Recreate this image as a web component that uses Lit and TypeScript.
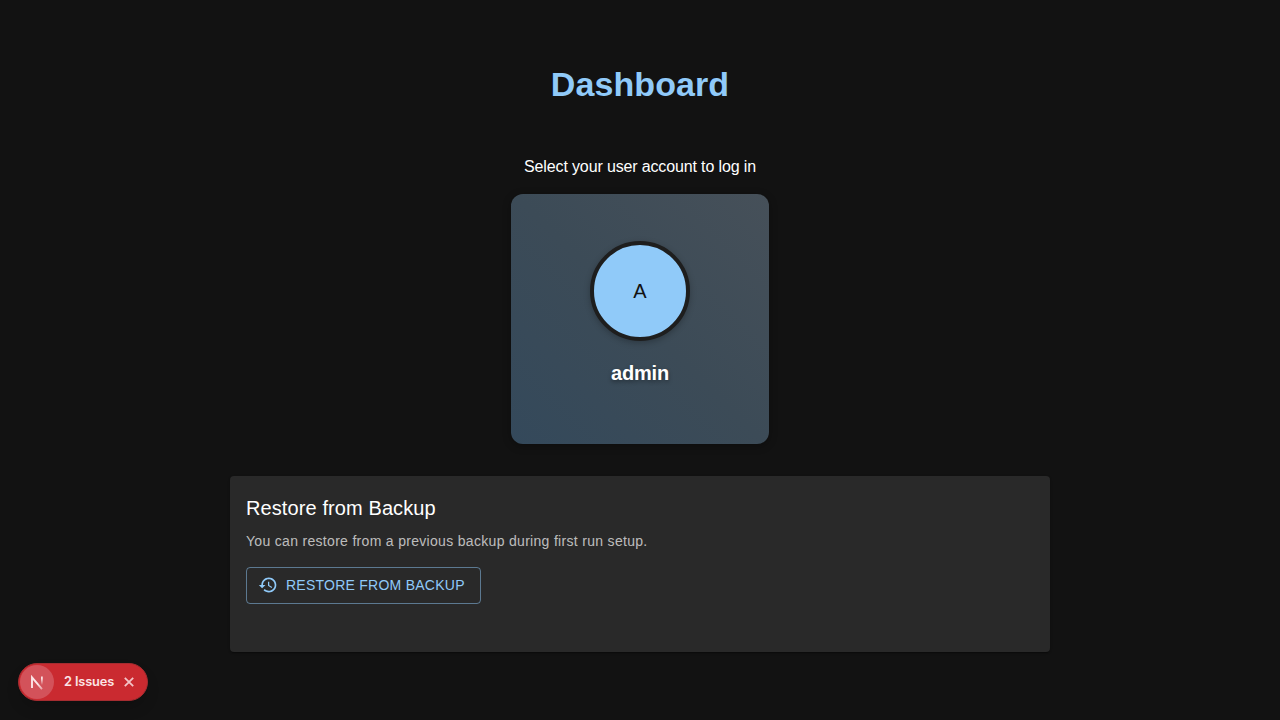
import { LitElement, html, css } from "lit";
import { customElement } from "lit/decorators.js";

@customElement("user-card")
class UserCard extends LitElement {
  static properties = { name: { type: String } };
  declare name: string;

  static styles = css`
    :host {
      display: block;
    }
    .card {
      box-sizing: border-box;
      width: 258px;
      height: 250px;
      border-radius: 12px;
      padding-top: 47px;
      display: flex;
      flex-direction: column;
      align-items: center;
      background: linear-gradient(45deg, #34495b 0%, #3c4b57 50%, #465059 100%);
      box-shadow: 0 2px 8px rgba(0, 0, 0, 0.3);
    }
    .avatar {
      box-sizing: border-box;
      width: 100px;
      height: 100px;
      border: 4px solid #1e1e1e;
      border-radius: 50%;
      display: flex;
      align-items: center;
      justify-content: center;
      background: #90caf9;
      color: #121212;
      font-size: 20px;
      line-height: 1;
      box-shadow: 0 2px 6px rgba(0, 0, 0, 0.25);
    }
    .name {
      margin-top: 16px;
      color: #fff;
      font-size: 20px;
      font-weight: 700;
      line-height: 32px;
      letter-spacing: -0.2px;
      text-shadow: 0 2px 4px rgba(0, 0, 0, 0.4);
    }
  `;

  render() {
    return html`<div class="card">
      <div class="avatar">${this.name[0].toUpperCase()}</div>
      <div class="name">${this.name}</div>
    </div>`;
  }
}

@customElement("restore-panel")
class RestorePanel extends LitElement {
  static styles = css`
    :host {
      display: block;
      align-self: stretch;
    }
    .panel {
      box-sizing: border-box;
      height: 176px;
      padding: 16px;
      border-radius: 4px;
      background: #292929;
      box-shadow: 0 2px 1px -1px rgba(0, 0, 0, 0.2), 0 1px 1px rgba(0, 0, 0, 0.14),
        0 1px 3px rgba(0, 0, 0, 0.12);
    }
    .title {
      margin: 0 0 7px;
      font-size: 20px;
      font-weight: 500;
      line-height: 32px;
      letter-spacing: 0.1px;
      color: #fff;
    }
    .text {
      margin: 0 0 16px;
      font-size: 14px;
      line-height: 20px;
      letter-spacing: 0.31px;
      color: rgba(255, 255, 255, 0.7);
    }
    .button {
      display: inline-flex;
      align-items: center;
      gap: 8px;
      box-sizing: border-box;
      padding: 5px 15px 5px 11px;
      border: 1px solid rgba(144, 202, 249, 0.5);
      border-radius: 4px;
      background: transparent;
      color: #90caf9;
      font-family: inherit;
      font-size: 14px;
      font-weight: 500;
      line-height: 24.5px;
      letter-spacing: 0.25px;
      text-transform: uppercase;
    }
    .icon {
      width: 20px;
      height: 20px;
      fill: currentColor;
    }
  `;

  render() {
    return html`<section class="panel">
      <h2 class="title">Restore from Backup</h2>
      <p class="text">You can restore from a previous backup during first run setup.</p>
      <button class="button">
        <svg class="icon" viewBox="0 0 24 24">
          <path
            d="M13 3c-4.97 0-9 4.03-9 9H1l3.89 3.89.07.14L9 12H6c0-3.87 3.13-7 7-7s7 3.13 7 7-3.13 7-7 7c-1.93 0-3.68-.79-4.94-2.06l-1.42 1.42C8.27 19.99 10.51 21 13 21c4.97 0 9-4.03 9-9s-4.03-9-9-9m-1 5v5l4.28 2.54.72-1.21-3.5-2.08V8z"
          />
        </svg>
        Restore from Backup
      </button>
    </section>`;
  }
}

@customElement("issues-badge")
class IssuesBadge extends LitElement {
  static styles = css`
    :host {
      position: absolute;
      left: 18px;
      top: 663px;
    }
    .badge {
      box-sizing: border-box;
      width: 130px;
      height: 38px;
      padding: 1px;
      display: flex;
      align-items: center;
      border: 1px solid #a52c30;
      border-radius: 19px;
      background: #ca2a30;
      box-shadow: 0 8px 16px -4px rgba(0, 0, 0, 0.24);
    }
    .logo {
      width: 34px;
      height: 34px;
      border-radius: 50%;
      background: #d3525a;
    }
    .label {
      margin-left: 10px;
      width: 51px;
      color: #fbe4e6;
      font-family: Inter, sans-serif;
      font-size: 12.8px;
      font-weight: 600;
      line-height: 18px;
      letter-spacing: -0.15px;
      white-space: nowrap;
    }
    .close {
      margin-left: 8px;
      width: 12px;
      height: 12px;
    }
  `;

  render() {
    return html`<div class="badge">
      <svg class="logo" viewBox="0 0 34 34" fill="none">
        <defs>
          <linearGradient id="diag" x1="12" y1="12" x2="23" y2="24" gradientUnits="userSpaceOnUse">
            <stop offset="0.55" stop-color="#fbe4e6" />
            <stop offset="1" stop-color="#fbe4e6" stop-opacity="0.5" />
          </linearGradient>
          <linearGradient id="stem" x1="0" y1="11" x2="0" y2="20" gradientUnits="userSpaceOnUse">
            <stop offset="0.3" stop-color="#fbe4e6" />
            <stop offset="1" stop-color="#fbe4e6" stop-opacity="0" />
          </linearGradient>
        </defs>
        <path d="M12 23V12.4L22 24.2" stroke="url(#diag)" stroke-width="1.9" />
        <path d="M21.9 11.4v9" stroke="url(#stem)" stroke-width="1.7" />
      </svg>
      <span class="label">2 Issues</span>
      <svg class="close" viewBox="0 0 12 12" fill="none">
        <path d="M1.8 1.8l8.4 8.4M10.2 1.8l-8.4 8.4" stroke="#f3c4c7" stroke-width="1.8" />
      </svg>
    </div>`;
  }
}

@customElement("app-root")
class AppRoot extends LitElement {
  static styles = css`
    :host {
      display: block;
      box-sizing: border-box;
      height: 720px;
      overflow: hidden;
      background: #121212;
      color: #fff;
      font-family: "Liberation Sans", Arial, sans-serif;
    }
    .page {
      box-sizing: border-box;
      width: 820px;
      margin: 0 auto;
      padding-top: 63px;
      display: flex;
      flex-direction: column;
      align-items: center;
    }
    .heading {
      margin: 0 0 50px;
      color: #90caf9;
      font-size: 34px;
      font-weight: 700;
      line-height: 42px;
      letter-spacing: 0.1px;
    }
    .prompt {
      margin: 0 0 15px;
      font-size: 16px;
      line-height: 24px;
      letter-spacing: -0.14px;
    }
    .user {
      margin-bottom: 32px;
    }
  `;

  render() {
    return html`<main class="page">
        <h1 class="heading">Dashboard</h1>
        <p class="prompt">Select your user account to log in</p>
        <user-card class="user" name="admin"></user-card>
        <restore-panel></restore-panel>
      </main>
      <issues-badge></issues-badge>`;
  }
}
